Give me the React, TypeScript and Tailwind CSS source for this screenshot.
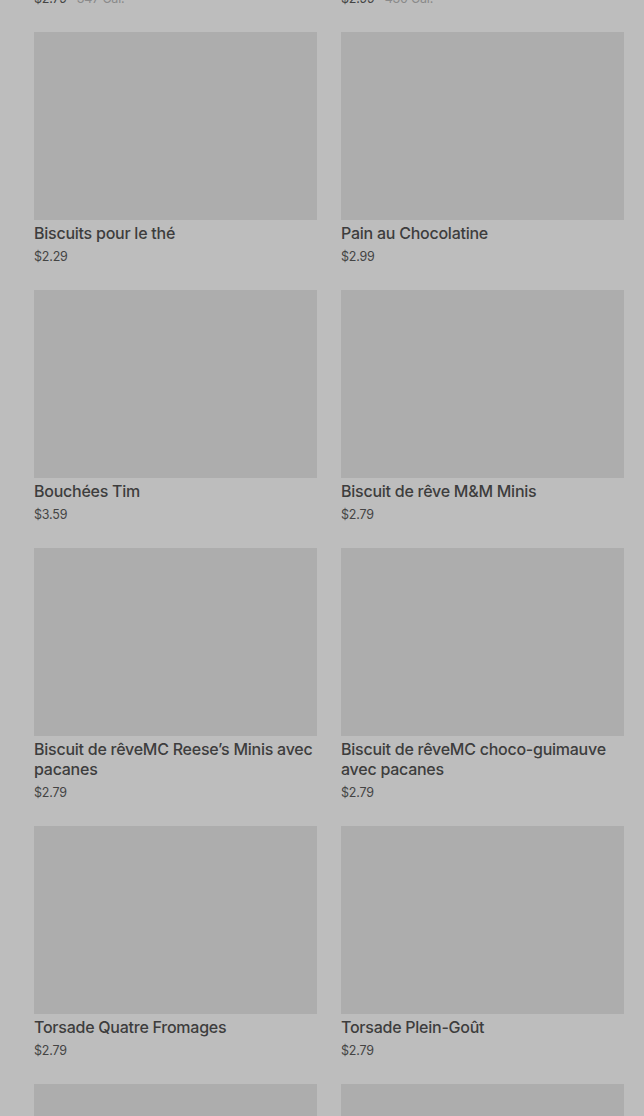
import React from 'react'

type Item = {
    name: string
    price: string
    cal?: string
}

const items: Item[] = [
    { name: 'Biscuit aux pépites de chocolat', price: '$2.79', cal: '347 Cal.' },
    { name: 'Biscuit à l’avoine et aux raisins', price: '$2.99', cal: '430 Cal.' },
    { name: 'Biscuits pour le thé', price: '$2.29' },
    { name: 'Pain au Chocolatine', price: '$2.99' },
    { name: 'Bouchées Tim', price: '$3.59' },
    { name: 'Biscuit de rêve M&M Minis', price: '$2.79' },
    { name: 'Biscuit de rêveMC Reese’s Minis avec pacanes', price: '$2.79' },
    { name: 'Biscuit de rêveMC choco-guimauve avec pacanes', price: '$2.79' },
    { name: 'Torsade Quatre Fromages', price: '$2.79' },
    { name: 'Torsade Plein-Goût', price: '$2.79' },
    { name: 'Muffin aux bleuets', price: '$2.49' },
    { name: 'Muffin au chocolat', price: '$2.49' },
]

function Card({ item }: { item: Item }) {
    return (
        <div className="flex flex-col">
            <div className="h-[188px] w-full bg-[#adadad]" />
            <div className="mt-[3px] text-[16px] font-medium leading-[20px] tracking-[-0.25px] text-[#3d3d3d]">
                {item.name}
            </div>
            <div className="mt-[4px] text-[12.5px] leading-[20px] tracking-[-0.2px] text-[#444444]">
                {item.price}
                {item.cal && (
                    <span className="text-[#8a8a8a]"> · {item.cal}</span>
                )}
            </div>
        </div>
    )
}

export default function App() {
    return (
        <div
            className="h-[1116px] w-[644px] overflow-hidden bg-[#bdbdbd]"
            style={{ fontFamily: 'Inter, "Noto Sans", sans-serif' }}
        >
            <div className="-mt-[226px] grid grid-cols-2 gap-x-[24px] gap-y-[23px] pl-[34px] pr-[20px]">
                {items.map((item, i) => (
                    <Card key={i} item={item} />
                ))}
            </div>
        </div>
    )
}
